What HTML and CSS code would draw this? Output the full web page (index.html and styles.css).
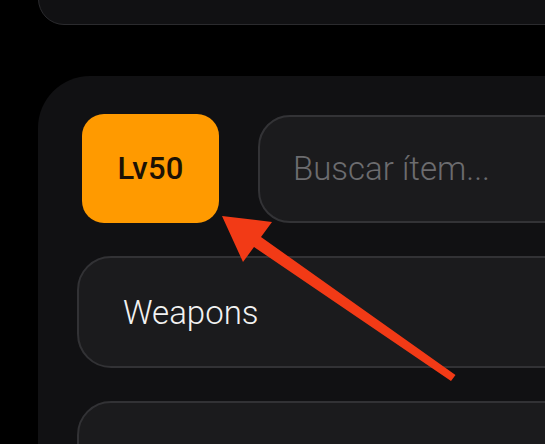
FILE: index.html
```html
<!DOCTYPE html>
<html lang="es">
<head>
<meta charset="utf-8">
<title>Inventario</title>
<link rel="stylesheet" href="styles.css">
</head>
<body>
<div class="page">
  <div class="card card-top"></div>
  <div class="card card-main">
    <div class="toolbar">
      <div class="level">Lv50</div>
      <input class="search" type="text" placeholder="Buscar ítem...">
    </div>
    <div class="row">Weapons</div>
    <div class="row"></div>
  </div>
</div>
<svg class="annotation" width="545" height="444" viewBox="0 0 545 444" aria-hidden="true">
  <polygon fill="#f23a16" points="222,216 272,222 261,237 455.5,375 451,381 254,247 243,262"/>
</svg>
</body>
</html>
```
FILE: styles.css
```css
html, body {
  margin: 0;
  padding: 0;
  background: #000;
  overflow: hidden;
  height: 444px;
}
body {
  font-family: Roboto, "Noto Sans", "Liberation Sans", sans-serif;
  position: relative;
}
.page {
  padding-left: 38px;
  display: flex;
  flex-direction: column;
  height: 444px;
  overflow: hidden;
  box-sizing: border-box;
}
.card {
  background: #111113;
  margin-right: -80px;
  flex: 0 0 auto;
}
.card-top {
  height: 55px;
  margin-top: -30px;
  border-radius: 26px;
  border: 1.5px solid #2b2b2e;
  box-sizing: border-box;
}
.card-main {
  margin-top: 51px;
  border-radius: 52px;
  padding: 38px 0 40px 39px;
  display: flex;
  flex-direction: column;
  gap: 33px;
  height: 500px;
  box-sizing: border-box;
}
.toolbar {
  display: flex;
  align-items: center;
  gap: 39px;
}
.level {
  margin-left: 5px;
  flex: 0 0 auto;
  width: 137px;
  height: 109px;
  border-radius: 22px;
  background: #ff9a00;
  color: #1c1204;
  font-size: 31px;
  font-weight: 500;
  display: flex;
  align-items: center;
  justify-content: center;
  letter-spacing: 0.2px;
}
.search {
  flex: 1 1 auto;
  height: 108px;
  box-sizing: border-box;
  border-radius: 32px;
  border: 2px solid #333336;
  background: #1b1b1d;
  padding: 0 0 0 33px;
  font-family: Roboto, "Noto Sans", sans-serif;
  font-size: 33px;
  font-weight: 300;
  color: #eee;
  outline: none;
}
.search::placeholder {
  color: #6c6c6f;
}
.row {
  height: 112px;
  box-sizing: border-box;
  border-radius: 34px;
  border: 2px solid #323235;
  background: #1b1b1d;
  padding-left: 44px;
  display: flex;
  align-items: center;
  color: #f2f2f2;
  font-size: 33px;
  font-weight: 300;
  flex: 0 0 auto;
}
.annotation {
  position: absolute;
  left: 0;
  top: 0;
  pointer-events: none;
}
```
